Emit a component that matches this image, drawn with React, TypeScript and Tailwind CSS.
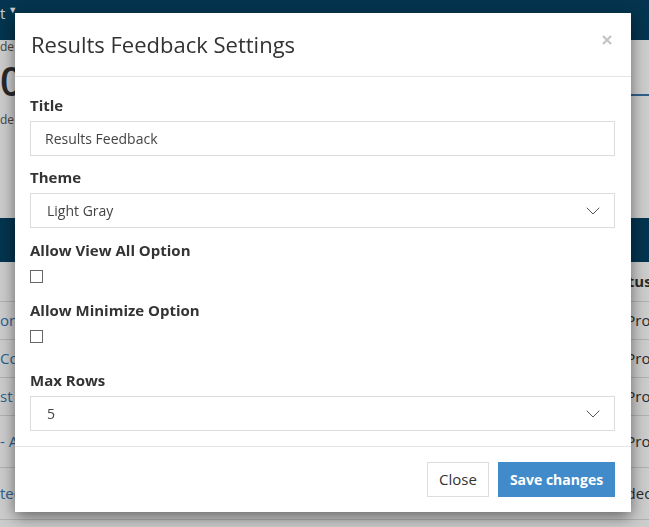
import { ChevronDown } from "lucide-react"

const rows = [
  { name: "on Quiz", status: "In Progress" },
  { name: "Course Review", status: "In Progress" },
  { name: "st Survey", status: "In Progress" },
  { name: "- Assessment", status: "In Progress", tall: true },
  { name: "ted", status: "Ended", tall: true },
]

function Field({ label, children, className = "" }: { label: string; children: React.ReactNode; className?: string }) {
  return (
    <div className={className}>
      <label className="block text-[15px] font-bold leading-[21px] text-[#333]">{label}</label>
      {children}
    </div>
  )
}

function SelectBox({ value }: { value: string }) {
  return (
    <div className="flex h-[35px] items-center justify-between border border-[#dcdcdc] bg-white pl-[16px] pr-[9px] text-[14px] text-[#444]">
      <span>{value}</span>
      <ChevronDown size={24} strokeWidth={1} className="text-[#555]" />
    </div>
  )
}

function Checkbox() {
  return <div className="h-[13px] w-[13px] border border-[#666] bg-white" />
}

export default function App() {
  return (
    <div className="relative h-[527px] w-full overflow-hidden bg-white font-['Open_Sans',sans-serif] text-[#333]">
      {/* page behind the dialog */}
      <div className="flex h-[40px] items-start bg-[#054263] pt-[2px] text-[15px] text-white">
        <span>t</span>
        <span className="ml-[3px] mt-[1px] text-[9px]">▼</span>
      </div>
      <div className="flex h-[178px] justify-between">
        <div className="w-[15px] overflow-hidden whitespace-nowrap">
          <div className="-mt-[2px] text-[12px] leading-[18px] text-[#555]">de</div>
          <div className="text-[40px] font-semibold leading-[50px] text-[#333]">0</div>
          <div className="mt-[5px] text-[12px] leading-[18px] text-[#555]">de</div>
        </div>
        <div className="mt-[54px] h-[2px] w-[20px] bg-[#3b78ad]" />
      </div>
      <div className="h-[44px] bg-[#054263]" />
      <div className="flex h-[40px] items-center justify-between border-b border-[#ddd]">
        <div />
        <div className="w-[45px] overflow-hidden whitespace-nowrap text-[15px] font-bold">Status</div>
      </div>
      {rows.map((r) => (
        <div key={r.name} className={"flex items-center justify-between border-b border-[#ddd] text-[15px] " + (r.tall ? "h-[52px]" : "h-[38px]")}>
          <div className="w-[15px] overflow-hidden whitespace-nowrap text-[#337ab7]">{r.name}</div>
          <div className="w-[40px] overflow-hidden whitespace-nowrap">{r.status}</div>
        </div>
      ))}

      {/* dialog */}
      <div className="fixed inset-0 bg-black/20">
        <div className="ml-[15px] mt-[13px] w-[616px] bg-white shadow-[0_5px_15px_rgba(0,0,0,0.5)]">
          <div className="flex h-[64px] items-center justify-between border-b border-[#e5e5e5] pl-[16px] pr-[19px]">
            <h4 className="text-[22px] leading-[33px] text-[#333]">Results Feedback Settings</h4>
            <svg width="10" height="10" viewBox="0 0 10 10" className="mb-[10px]">
              <path d="M1 1 9 9M9 1 1 9" stroke="#c4c4c4" strokeWidth="2.2" />
            </svg>
          </div>
          <div className="pb-[15px] pl-[15px] pr-[16px] pt-[18px]">
            <Field label="Title">
              <div className="mt-[5px] flex h-[35px] items-center border border-[#dcdcdc] bg-white pl-[14px] text-[14px] text-[#444]">
                Results Feedback
              </div>
            </Field>
            <Field label="Theme" className="mt-[11px]">
              <div className="mt-[5px]">
                <SelectBox value="Light Gray" />
              </div>
            </Field>
            <Field label="Allow View All Option" className="mt-[12px]">
              <div className="mt-[9px]">
                <Checkbox />
              </div>
            </Field>
            <Field label="Allow Minimize Option" className="mt-[17px]">
              <div className="mt-[9px]">
                <Checkbox />
              </div>
            </Field>
            <Field label="Max Rows" className="mt-[27px]">
              <div className="mt-[5px]">
                <SelectBox value="5" />
              </div>
            </Field>
          </div>
          <div className="flex justify-end gap-[9px] border-t border-[#e5e5e5] pb-[15px] pr-[16px] pt-[15px]">
            <button className="h-[35px] w-[62px] border border-[#ddd] bg-white text-[15px] text-[#333]">Close</button>
            <button className="h-[35px] w-[117px] bg-[#428bca] text-[14px] font-bold text-white">Save changes</button>
          </div>
        </div>
      </div>
    </div>
  )
}
